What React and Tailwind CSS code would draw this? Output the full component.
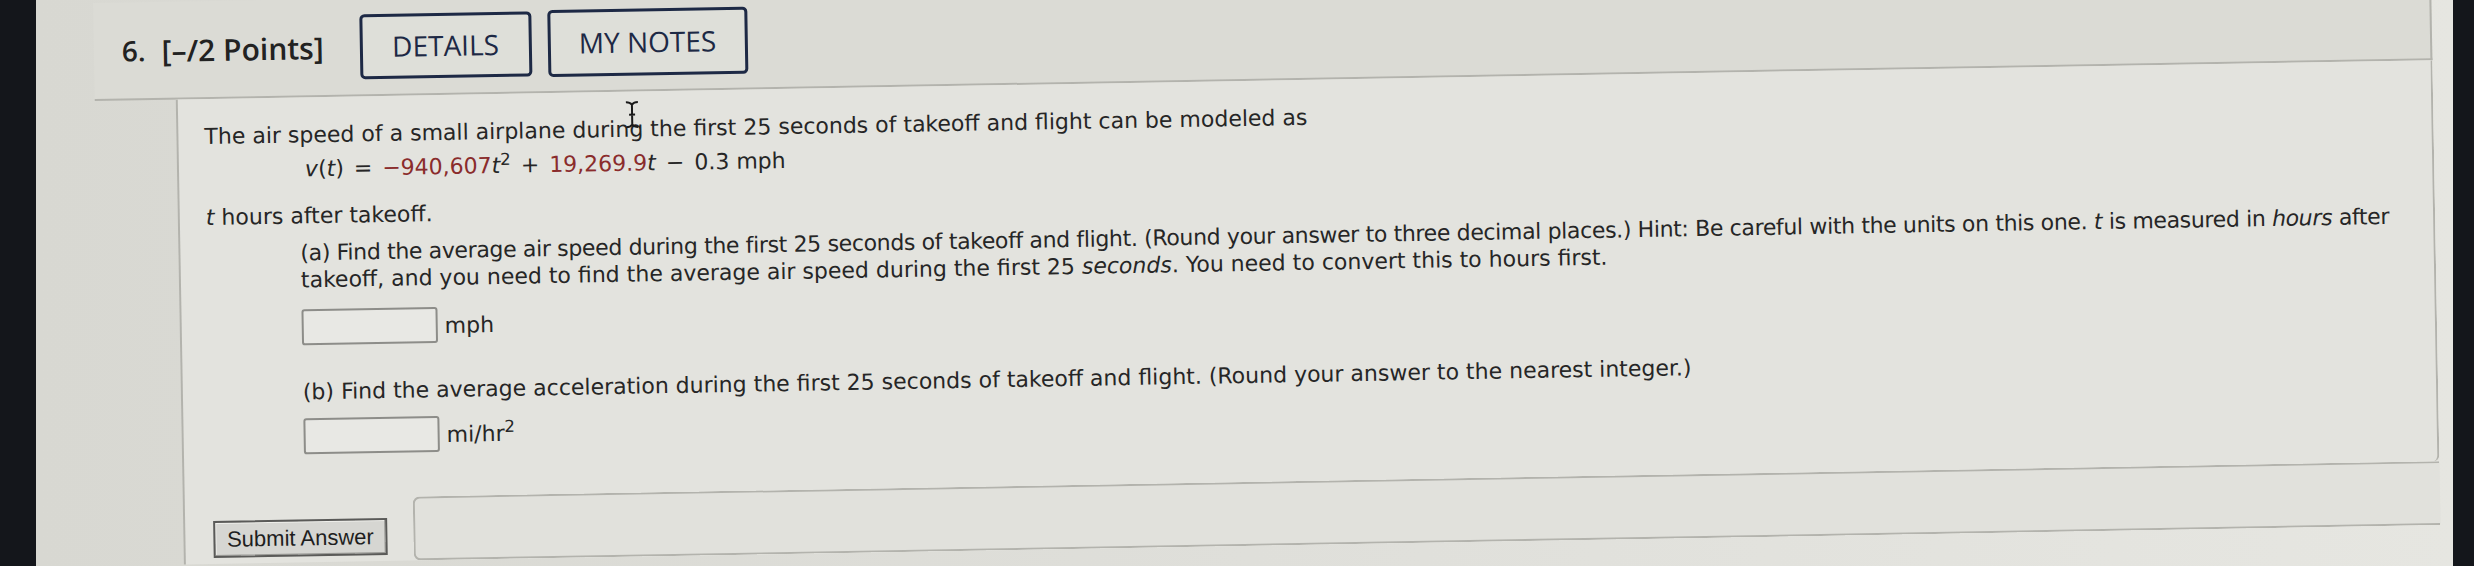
import React from 'react';

function IBeam() {
    return (
        <svg className="absolute left-[446px] top-[9px]" width="16" height="28" viewBox="0 0 16 28">
            <path d="M2 1.5 Q6 1.5 8 4 Q10 1.5 14 1.5 M8 4 V24 M2 26.5 Q6 26.5 8 24 Q10 26.5 14 26.5 M5 14 H11" fill="none" stroke="#1a1a1a" strokeWidth="2" />
        </svg>
    );
}

function AnswerBox({ children }) {
    return (
        <div className="flex items-center">
            <div className="w-[136px] h-[36px] border-2 border-[#8d8d89] rounded-[3px] bg-[#e8e8e4]"></div>
            <span className="ml-[7px]">{children}</span>
        </div>
    );
}

function Op({ children }) {
    return <span className="mx-[3px]"> {children} </span>;
}

export default function App() {
    const body = { fontFamily: '"DejaVu Sans", Verdana, sans-serif' };
    const red = 'text-[#8a2c2c]';

    return (
        <div className="w-[2474px] h-[566px] overflow-hidden bg-[#14161b] flex">
            <div className="w-[36px] shrink-0"></div>
            <div className="w-[2417px] shrink-0 h-full overflow-hidden bg-linear-to-r from-[#d8d8d2] via-[#dfdfda] to-[#e6e6e1]">
                <div className="origin-top-left -rotate-1 pt-[4px] pl-[57px] w-[2400px]">
                    {/* header */}
                    <div
                        className="w-[2338px] h-[98px] bg-[#dbdbd5] border-b-2 border-r-2 border-[#b3b3ad] flex items-center pl-[28px] text-[#222]"
                        style={{ fontFamily: '"Open Sans", sans-serif' }}
                    >
                        <span className="text-[28px] font-semibold">6.</span>
                        <span className="text-[30px] font-semibold ml-[16px]">[–/2 Points]</span>
                        <div className="ml-[36px] w-[172px] h-[65px] border-[3px] border-[#1d2945] rounded-[5px] flex items-center justify-center text-[28px] text-[#1d2945] bg-[#dedfd9]">
                            DETAILS
                        </div>
                        <div className="ml-[16px] w-[200px] h-[67px] border-[3px] border-[#1d2945] rounded-[5px] flex items-center justify-center text-[28px] text-[#1d2945] bg-[#dedfd9]">
                            MY NOTES
                        </div>
                    </div>

                    {/* question area */}
                    <div className="flex">
                        <div className="w-[81px] shrink-0"></div>
                        <div className="w-[2257px] border-l-2 border-[#b3b3ad] bg-[#e3e3de]" style={body}>
                            <div className="relative border-r-2 border-[#b3b3ad] rounded-br-[6px] pt-[24px] pb-[44px] pl-[26px] text-[22px] leading-[27px] text-[#262626]">
                                <IBeam />
                                <p>The air speed of a small airplane during the first 25 seconds of takeoff and flight can be modeled as</p>
                                <p className="mt-[7px] pl-[100px] whitespace-nowrap">
                                    <i>v</i>(<i>t</i>)<Op>=</Op><span className={red}>−940,607</span><i>t</i><sup>2</sup><Op>+</Op><span className={red}>19,269.9</span><i>t</i><Op>−</Op>0.3 mph
                                </p>
                                <p className="mt-[20px]"><i>t</i> hours after takeoff.</p>

                                <div className="pl-[94px]">
                                    <p className="mt-[10px] whitespace-nowrap">
                                        <span className="tracking-[-0.35px]">
                                            (a) Find the average air speed during the first 25 seconds of takeoff and flight. (Round your answer to three decimal places.) Hint: Be careful with the units on this one. <i>t</i> is measured in <i>hours</i> after
                                        </span>
                                        <br />
                                        takeoff, and you need to find the average air speed during the first 25 <i>seconds</i>. You need to convert this to hours first.
                                    </p>
                                    <div className="mt-[16px]">
                                        <AnswerBox>mph</AnswerBox>
                                    </div>

                                    <p className="mt-[33px] whitespace-nowrap">
                                        (b) Find the average acceleration during the first 25 seconds of takeoff and flight. (Round your answer to the nearest integer.)
                                    </p>
                                    <div className="mt-[13px]">
                                        <AnswerBox>mi/hr<sup>2</sup></AnswerBox>
                                    </div>
                                </div>
                            </div>

                            {/* submit row */}
                            <div className="flex">
                                <div className="w-[228px] shrink-0 pt-[21px] pl-[28px]">
                                    <button
                                        className="w-[174px] h-[37px] bg-[#d6d6d2] border-2 border-[#5a5a58] shadow-[inset_-1px_-1px_0_#9a9a96,inset_1px_1px_0_#f0f0ec] text-[22px] text-[#1e1e1e] leading-none"
                                        style={{ fontFamily: '"Liberation Sans", Arial, sans-serif' }}
                                    >
                                        Submit Answer
                                    </button>
                                </div>
                                <div className="flex-1 h-[64px] border-l-2 border-t-2 border-b-2 border-[#b3b3ad] rounded-tl-[7px] rounded-bl-[7px] bg-[#e1e1dc]"></div>
                            </div>
                        </div>
                    </div>
                </div>
            </div>
            <div className="flex-1"></div>
        </div>
    );
}
